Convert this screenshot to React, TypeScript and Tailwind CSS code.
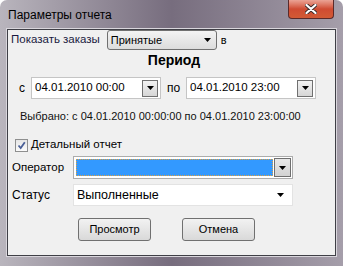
import React from "react";

const Arrow = () => (
  <svg width="7" height="4" viewBox="0 0 7 4" className="block">
    <path d="M0 0H7L3.5 4Z" fill="#000" />
  </svg>
);

const DropBtn = () => (
  <div className="flex h-[17px] w-[16px] items-center justify-center border border-[#707070] bg-gradient-to-b from-[#f2f2f2] to-[#d6d6d6]">
    <Arrow />
  </div>
);

export default function App() {
  return (
    <div
      className="relative h-[266px] w-[343px] overflow-hidden rounded-t-[7px] bg-gradient-to-r from-[#b9b5bd] via-[#776d7e] to-[#a59eaa] text-[11px] text-black"
      style={{ fontFamily: '"Liberation Sans", Arial, sans-serif' }}
    >
      <div className="flex h-[29px] items-start">
        <div className="pl-[8px] pt-[6px] text-[12px] text-black">Параметры отчета</div>
      </div>
      <div className="absolute right-[9px] top-0 flex h-[19px] w-[46px] items-center justify-center rounded-b-[4px] border border-t-0 border-[#5a2a2a] bg-gradient-to-b from-[#eaa395] via-[#cf4b32] to-[#d25a35]">
        <svg width="12" height="10" viewBox="0 0 12 10">
          <path d="M1.5 1L10.5 9M10.5 1L1.5 9" stroke="#3a2a2a" strokeWidth="4" strokeLinecap="round" />
          <path d="M1.5 1L10.5 9M10.5 1L1.5 9" stroke="#fff" strokeWidth="2.2" strokeLinecap="round" />
        </svg>
      </div>
      <div className="mx-[7px] h-[227px] border border-[#3f3f46] bg-[#f0f0f0] shadow-[0_0_0_1px_#d9d6dc]">
        <div className="flex h-[20px] items-center">
          <span className="pl-[3px] pr-[6px] text-[11.5px] text-[#1a1a40]">Показать заказы</span>
          <div className="ml-[1px] flex h-[20px] w-[110px] items-center justify-between rounded-[3px] border border-[#707070] bg-gradient-to-b from-[#f3f3f3] to-[#dcdcdc] pl-[3px] pr-[5px]">
            <span>Принятые</span>
            <Arrow />
          </div>
          <span className="pl-[4px]">в</span>
        </div>
        <div className="flex h-[21px] items-center justify-center pl-[5px] text-[14px] font-bold">Период</div>
        <div className="mt-[6px] flex h-[22px] items-center">
          <span className="w-[23px] pl-[11px] text-[12px]">с</span>
          <div className="flex h-[22px] w-[130px] items-center justify-between border border-[#c5c5c5] bg-white pl-[3px] pr-[2px] text-[11.5px]">
            <span>04.01.2010 00:00</span>
            <DropBtn />
          </div>
          <span className="w-[25px] pl-[6px] text-[12px]">по</span>
          <div className="flex h-[22px] w-[130px] items-center justify-between border border-[#c5c5c5] bg-white pl-[3px] pr-[2px] text-[11.5px]">
            <span>04.01.2010 23:00</span>
            <DropBtn />
          </div>
        </div>
        <div className="mt-[10px] pl-[12px] leading-[15px] text-[#111]">Выбрано: с 04.01.2010 00:00:00 по 04.01.2010 23:00:00</div>
        <div className="mt-[14px] flex h-[14px] items-center pl-[7px]">
          <div className="flex h-[13px] w-[13px] items-center justify-center border border-[#8e8f8f] bg-gradient-to-b from-[#e6e6e6] to-[#fbfbfb]">
            <svg width="9" height="9" viewBox="0 0 9 9">
              <path d="M1.5 4.5L3.7 7L7.8 1.2" stroke="#4a5f97" strokeWidth="1.8" fill="none" />
            </svg>
          </div>
          <span className="pl-[3px] text-[11.5px]">Детальный отчет</span>
        </div>
        <div className="mt-[4px] flex h-[23px] items-center">
          <span className="w-[65px] pl-[4px] text-[11.5px]">Оператор</span>
          <div className="flex h-[23px] w-[220px] items-center border border-[#acacac] bg-white pl-[2px] pr-[1px]">
            <div className="h-[17px] flex-1 border border-dotted border-[#e0a040] bg-[#3399ff]" />
            <div className="ml-[1px] flex h-[19px] w-[17px] items-center justify-center border border-[#6f6f6f] bg-gradient-to-b from-[#e8e8e8] to-[#d2d2d2]">
              <Arrow />
            </div>
          </div>
        </div>
        <div className="mt-[5px] flex h-[22px] items-center">
          <span className="w-[65px] pl-[4px] text-[12px]">Статус</span>
          <div className="flex h-[22px] w-[220px] items-center justify-between border border-[#e3e3e3] bg-white pl-[3px] pr-[8px]">
            <span className="text-[12.5px]">Выполненные</span>
            <Arrow />
          </div>
        </div>
        <div className="mt-[12px] flex h-[23px] items-center">
          <div className="ml-[70px] flex h-[23px] w-[73px] items-center justify-center rounded-[3px] border border-[#707070] bg-gradient-to-b from-[#f2f2f2] to-[#d9d9d9]">Просмотр</div>
          <div className="ml-[31px] flex h-[23px] w-[73px] items-center justify-center rounded-[3px] border border-[#707070] bg-gradient-to-b from-[#f2f2f2] to-[#d9d9d9]">Отмена</div>
        </div>
      </div>
    </div>
  );
}
